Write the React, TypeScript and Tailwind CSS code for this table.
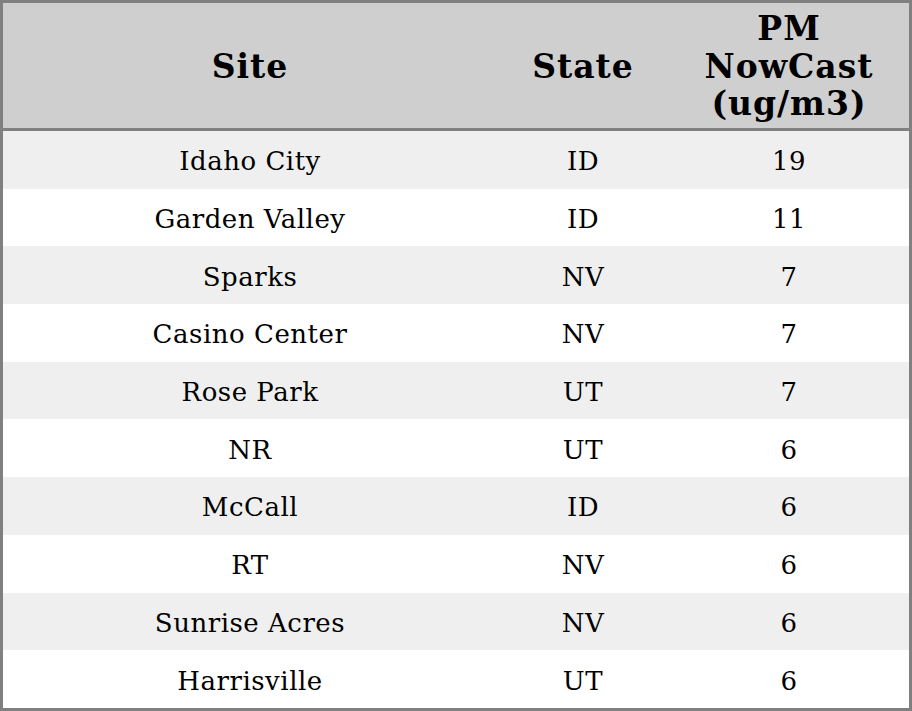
// PM NowCast readings by monitoring site, highest first.
const rows: [string, string, number][] = [
  ["Idaho City", "ID", 19],
  ["Garden Valley", "ID", 11],
  ["Sparks", "NV", 7],
  ["Casino Center", "NV", 7],
  ["Rose Park", "UT", 7],
  ["NR", "UT", 6],
  ["McCall", "ID", 6],
  ["RT", "NV", 6],
  ["Sunrise Acres", "NV", 6],
  ["Harrisville", "UT", 6],
];

const cols = "grid grid-cols-[494px_172px_240px] items-center text-center";

export default function App() {
  return (
    <div className="h-[711px] w-[912px] border-[3px] border-[#808080] bg-white font-['DejaVu_Serif',serif] text-black">
      <div className={`${cols} h-[128px] border-b-[3px] border-[#808080] bg-[#cfcfcf] pt-[2px] text-[33px] font-bold leading-[37.5px] tracking-[0.03em]`}>
        <div>Site</div>
        <div>State</div>
        <div>
          PM
          <br />
          NowCast
          <br />
          (ug/m3)
        </div>
      </div>
      {rows.map(([site, state, pm], i) => (
        <div key={site} className={`${cols} h-[57.7px] pt-[3px] text-[26px] leading-[30px] tracking-[0.02em] ${i % 2 === 0 ? "bg-[#efefef]" : "bg-white"}`}>
          <div>{site}</div>
          <div>{state}</div>
          <div>{pm}</div>
        </div>
      ))}
    </div>
  );
}
